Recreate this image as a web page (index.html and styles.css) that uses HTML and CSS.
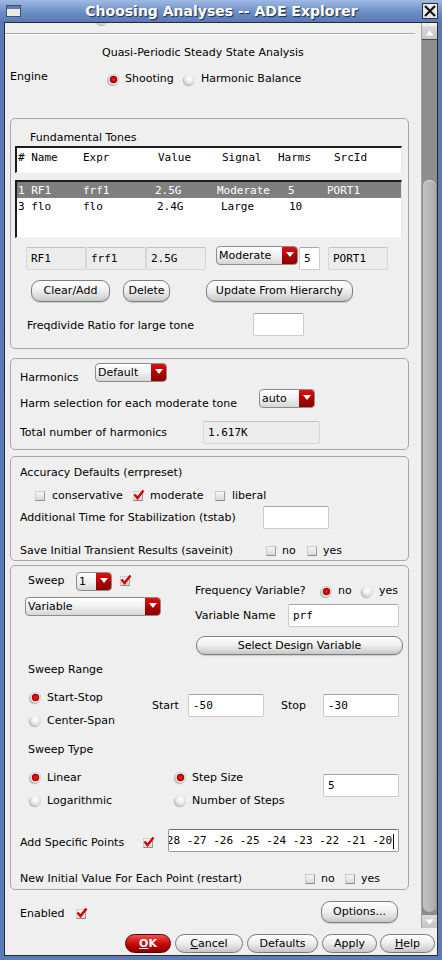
FILE: index.html
```html
<!DOCTYPE html>
<html>
<head>
<meta charset="utf-8">
<link rel="stylesheet" href="styles.css">
</head>
<body>
<div class="window">
  <div class="titlebar">
    <span class="win-icon"></span>
    <span class="title">Choosing Analyses -- ADE Explorer</span>
    <span class="close"><svg width="14" height="14" viewBox="0 0 14 14"><path d="M2 2 L12 12 M12 2 L2 12" stroke="#111" stroke-width="2.2" fill="none"/></svg></span>
  </div>
  <div class="frame">
    <div class="scrollarea">
      <div class="pane">
        <div class="clipped"><div class="clipped-inner"><span class="radio"></span><span class="clip-text">new</span></div></div>
        <div class="sep"></div>
        <div class="heading">Quasi-Periodic Steady State Analysis</div>
        <div class="engine-row">
          <span class="engine-label">Engine</span>
          <span class="radio on"></span><span class="opt opt-shooting">Shooting</span>
          <span class="radio"></span><span class="opt">Harmonic Balance</span>
        </div>

        <section class="group group-tones">
          <div class="tones-title">Fundamental Tones</div>
          <div class="list-header mono">
            <span class="h1"># Name</span><span class="h2">Expr</span><span class="h3">Value</span><span class="h4">Signal</span><span class="h5">Harms</span><span>SrcId</span>
          </div>
          <div class="list-box mono">
            <div class="list-row selected">
              <span class="r1c1">1 RF1</span><span class="r1c2">frf1</span><span class="r1c3">2.5G</span><span class="r1c4">Moderate</span><span class="r1c5">5</span><span>PORT1</span>
            </div>
            <div class="list-row">
              <span class="r2c1">3 flo</span><span class="r2c2">flo</span><span class="r2c3">2.4G</span><span class="r2c4">Large</span><span>10</span>
            </div>
          </div>
          <div class="tone-fields">
            <span class="field disabled mono f-name">RF1</span>
            <span class="field disabled mono f-expr">frf1</span>
            <span class="field disabled mono f-value">2.5G</span>
            <span class="combo combo-signal"><span class="combo-text">Moderate</span><span class="combo-arrow"></span></span>
            <span class="field mono f-harms">5</span>
            <span class="field disabled mono f-src">PORT1</span>
          </div>
          <div class="tone-buttons">
            <span class="btn btn-clear">Clear/Add</span>
            <span class="btn btn-delete">Delete</span>
            <span class="btn btn-update">Update From Hierarchy</span>
          </div>
          <div class="freqdiv-row">
            <span class="lbl-freqdiv">Freqdivide Ratio for large tone</span>
            <span class="field f-freqdiv"></span>
          </div>
        </section>

        <section class="group group-harm">
          <div class="harm-row">
            <span class="lbl-harm">Harmonics</span>
            <span class="combo combo-default"><span class="combo-text">Default</span><span class="combo-arrow"></span></span>
          </div>
          <div class="harmsel-row">
            <span class="lbl-harmsel">Harm selection for each moderate tone</span>
            <span class="combo combo-auto"><span class="combo-text">auto</span><span class="combo-arrow"></span></span>
          </div>
          <div class="total-row">
            <span class="lbl-total">Total number of harmonics</span>
            <span class="field disabled mono f-total">1.617K</span>
          </div>
        </section>

        <section class="group group-acc">
          <div class="acc-title">Accuracy Defaults (errpreset)</div>
          <div class="acc-checks">
            <span class="check c-cons"></span><span class="ck-lbl lbl-cons">conservative</span>
            <span class="check on"><svg class="tick" width="12" height="12" viewBox="0 0 12 12"><path d="M1.5 5.5 L4.5 9 L10.5 1.5" stroke="#d40000" stroke-width="2.4" fill="none"/></svg></span><span class="ck-lbl lbl-mod">moderate</span>
            <span class="check"></span><span class="ck-lbl">liberal</span>
          </div>
          <div class="tstab-row">
            <span class="lbl-tstab">Additional Time for Stabilization (tstab)</span>
            <span class="field f-tstab"></span>
          </div>
          <div class="save-row">
            <span class="lbl-save">Save Initial Transient Results (saveinit)</span>
            <span class="check"></span><span class="ck-lbl lbl-no">no</span>
            <span class="check"></span><span class="ck-lbl">yes</span>
          </div>
        </section>

        <section class="group group-sweep">
          <div class="sweep-top">
            <div class="sweep-left">
              <div class="sweep-row">
                <span class="lbl-sweep">Sweep</span>
                <span class="combo combo-num"><span class="combo-text">1</span><span class="combo-arrow"></span></span>
                <span class="check on sweep-check"><svg class="tick" width="12" height="12" viewBox="0 0 12 12"><path d="M1.5 5.5 L4.5 9 L10.5 1.5" stroke="#d40000" stroke-width="2.4" fill="none"/></svg></span>
              </div>
              <span class="combo combo-variable"><span class="combo-text">Variable</span><span class="combo-arrow"></span></span>
            </div>
            <div class="sweep-right">
              <div class="freqvar-row">
                <span class="lbl-freqvar">Frequency Variable?</span>
                <span class="radio on"></span><span class="opt lbl-fno">no</span>
                <span class="radio"></span><span class="opt">yes</span>
              </div>
              <div class="varname-row">
                <span class="lbl-varname">Variable Name</span>
                <span class="field mono f-varname">prf</span>
              </div>
              <span class="btn btn-select">Select Design Variable</span>
            </div>
          </div>

          <div class="sec-title">Sweep Range</div>
          <div class="range-block">
            <div class="radio-col range-col">
              <div class="radio-line"><span class="radio on"></span><span class="opt">Start-Stop</span></div>
              <div class="radio-line"><span class="radio"></span><span class="opt">Center-Span</span></div>
            </div>
            <div class="range-fields">
              <span class="lbl-start">Start</span>
              <span class="field mono f-range">-50</span>
              <span class="lbl-stop">Stop</span>
              <span class="field mono f-range">-30</span>
            </div>
          </div>

          <div class="sec-title sec-type">Sweep Type</div>
          <div class="type-block">
            <div class="radio-col type-col1">
              <div class="radio-line"><span class="radio on"></span><span class="opt">Linear</span></div>
              <div class="radio-line"><span class="radio"></span><span class="opt">Logarithmic</span></div>
            </div>
            <div class="radio-col type-col2">
              <div class="radio-line"><span class="radio on"></span><span class="opt">Step Size</span></div>
              <div class="radio-line"><span class="radio"></span><span class="opt">Number of Steps</span></div>
            </div>
            <span class="field mono f-step">5</span>
          </div>

          <div class="points-row">
            <span class="lbl-points">Add Specific Points</span>
            <span class="check on points-check"><svg class="tick" width="12" height="12" viewBox="0 0 12 12"><path d="M1.5 5.5 L4.5 9 L10.5 1.5" stroke="#d40000" stroke-width="2.4" fill="none"/></svg></span>
            <span class="field mono f-points"><span class="points-text">-29 -28 -27 -26 -25 -24 -23 -22 -21 -20</span><span class="caret"></span></span>
          </div>

          <div class="restart-row">
            <span class="lbl-restart">New Initial Value For Each Point (restart)</span>
            <span class="check"></span><span class="ck-lbl lbl-rno">no</span>
            <span class="check"></span><span class="ck-lbl">yes</span>
          </div>
        </section>

        <div class="enabled-row">
          <span class="lbl-enabled">Enabled</span>
          <span class="check on enabled-check"><svg class="tick" width="12" height="12" viewBox="0 0 12 12"><path d="M1.5 5.5 L4.5 9 L10.5 1.5" stroke="#d40000" stroke-width="2.4" fill="none"/></svg></span>
          <span class="btn btn-options">Options...</span>
        </div>
      </div>
      <div class="vscroll">
        <div class="sb-btn sb-up"><svg width="9" height="6" viewBox="0 0 9 6"><path d="M0.5 5.5 L4.5 0.5 L8.5 5.5 Z" fill="#fff"/></svg></div>
        <div class="sb-track"><div class="sb-thumb"></div></div>
        <div class="sb-btn sb-down"><svg width="9" height="6" viewBox="0 0 9 6"><path d="M0.5 0.5 L4.5 5.5 L8.5 0.5 Z" fill="#fff"/></svg></div>
      </div>
    </div>
    <div class="footer">
      <span class="fbtn fbtn-ok"><u>O</u>K</span>
      <span class="fbtn fbtn-cancel"><u>C</u>ancel</span>
      <span class="fbtn fbtn-defaults">Defaults</span>
      <span class="fbtn fbtn-apply">Apply</span>
      <span class="fbtn fbtn-help"><u>H</u>elp</span>
    </div>
  </div>
</div>
</body>
</html>
```

FILE: styles.css
```css
* { box-sizing: border-box; }
html, body { margin: 0; padding: 0; }
body {
  width: 442px; height: 960px; overflow: hidden;
  font-family: "DejaVu Sans", "Noto Sans", sans-serif;
  font-size: 11px; line-height: 14px; color: #000;
  background: #5a7db9;
}
.mono { font-family: "DejaVu Sans Mono", "Liberation Mono", monospace; font-size: 11px; }

.window {
  width: 442px; height: 960px;
  display: flex; flex-direction: column;
  background: linear-gradient(#9fb9e2 0, #6d8fc8 12px, #5879b6 22px, #5a7db9 100%);
}
.titlebar { height: 22px; display: flex; align-items: center; flex: none; }
.win-icon {
  margin-left: 6px; width: 15px; height: 12px;
  border: 1px solid #3e4f70;
  background: linear-gradient(#5c7cb0 0, #5c7cb0 3px, #e6eadf 3px);
}
.title {
  flex: 1; text-align: center; color: #fff;
  font-weight: bold; font-size: 14px; line-height: 22px;
  text-shadow: 1px 1px 1px #1e2a44;
}
.close {
  width: 16px; height: 16px; margin-right: 4px;
  border: 1px solid #2e2e2e; background: #e9e9e9;
  display: flex; align-items: center; justify-content: center;
}

.frame {
  flex: 1; margin: 0 4px 4px 4px;
  border: 1px solid #2a2a2a;
  background: #efefef;
  display: flex; flex-direction: column;
}
.scrollarea { height: 905px; display: flex; flex: none; }
.pane { width: 416px; overflow: hidden; display: flex; flex-direction: column; flex: none; }

.clipped { height: 10px; overflow: hidden; flex: none; }
.clipped-inner { margin-top: -11px; margin-left: 92px; height: 14px; display: flex; align-items: center; }
.clip-text { margin-left: 9px; }
.sep { width: 410px; height: 2px; border-top: 1px solid #a8a8a8; border-bottom: 1px solid #fff; flex: none; }
.heading { margin-top: 11px; padding-left: 97px; }

.engine-row { margin-top: 8px; margin-left: 5px; height: 22px; display: flex; align-items: center; }
.engine-label { width: 98px; align-self: flex-start; margin-top: 2px; }
.opt { margin-left: 6px; }
.opt-shooting { width: 59px; }
.radio-line .opt { margin-left: 6px; }

/* radio & check */
.radio {
  width: 11px; height: 11px; border-radius: 50%; flex: none;
  background: radial-gradient(circle at 50% 40%, #ffffff 0, #ececec 45%, #c4c4c4 85%, #a8a8a8 100%);
  box-shadow: -1px 1px 1px rgba(0,0,0,0.25);
}
.radio.on {
  background: radial-gradient(circle at 50% 50%, #ff2020 0, #d00000 2.6px, #8a0000 3.4px, #cfcfcf 4px, #efefef 4.6px, #b4b4b4 5.5px);
}
.check {
  width: 10px; height: 10px; flex: none; position: relative;
  background: linear-gradient(#f6f6f6, #d9d9d9);
  border: 1px solid #cdcdcd; border-right-color: #9c9c9c; border-bottom-color: #8c8c8c;
}
.check .tick { position: absolute; left: -1px; top: -3px; }
.ck-lbl { margin-left: 7px; }

/* group */
.group {
  margin-left: 5px; width: 399px; flex: none;
  border: 1px solid #a6a6a6; border-radius: 5px;
  display: flex; flex-direction: column;
}

/* fields */
.field {
  height: 23px; flex: none;
  background: #fff;
  border: 1px solid #cbcbcb; border-top-color: #a4a4a4; border-radius: 2px;
  display: flex; align-items: center; padding-left: 4px; padding-top: 1px;
  white-space: pre; overflow: hidden;
}
.field.disabled { background: #ececec; border-color: #d6d6d6; border-top-color: #c2c2c2; }

/* combo */
.combo {
  height: 19px; flex: none; display: flex;
  border: 1px solid #8c8c8c; border-radius: 4px; overflow: hidden;
  background: linear-gradient(#ffffff, #f1f1f1 50%, #d6d6d6);
}
.combo-text { flex: 1; padding-left: 2px; line-height: 17px; }
.combo-arrow {
  width: 15px; flex: none;
  background: linear-gradient(#e01010, #b00000 50%, #8a0000);
  display: flex; align-items: center; justify-content: center;
}
.combo-arrow::before {
  content: ""; width: 0; height: 0; margin-top: -2px;
  border-left: 4px solid transparent; border-right: 4px solid transparent;
  border-top: 5px solid #fff;
}

/* buttons */
.btn {
  height: 22px; flex: none;
  border: 1px solid #7e7e7e; border-radius: 9px;
  background: linear-gradient(#ffffff, #f0f0f0 45%, #d8d8d8 80%, #c6c6c6);
  display: flex; align-items: center; justify-content: center;
  box-shadow: 0 1px 1px rgba(0,0,0,0.15);
}

/* group 1 */
.group-tones { margin-top: 28px; padding-bottom: 12px; }
.tones-title { margin-top: 12px; margin-left: 19px; }
.list-header, .list-box {
  margin-left: 4px; width: 387px; background: #fff;
  border-top: 2px solid #1c1c1c; border-left: 2px solid #1c1c1c;
  border-right: 1px solid #e4e4e4; border-bottom: 1px solid #f4f4f4;
}
.list-header span, .list-row span { white-space: pre; flex: none; }
.list-header { margin-top: 1px; height: 27px; padding-top: 3px; padding-left: 1px; display: flex; align-items: flex-start; }
.h1 { width: 65px; } .h2 { width: 75px; } .h3 { width: 64px; } .h4 { width: 56px; } .h5 { width: 56px; }
.list-box { margin-top: 7px; height: 58px; display: flex; flex-direction: column; }
.list-row { height: 16px; line-height: 17px; display: flex; padding-left: 1px; flex: none; }
.list-row.selected { background: #7f7f7f; color: #fff; }
.r1c1 { width: 65px; } .r1c2 { width: 72px; } .r1c3 { width: 62px; } .r1c4 { width: 71px; } .r1c5 { width: 39px; }
.r2c1 { width: 65px; } .r2c2 { width: 74px; } .r2c3 { width: 64px; } .r2c4 { width: 68px; }

.tone-fields { margin-top: 8px; height: 24px; display: flex; align-items: flex-start; }
.tone-fields .field { margin-top: 1px; }
.f-name { margin-left: 15px; width: 60px; }
.f-expr { width: 60px; }
.f-value { width: 60px; }
.combo-signal { margin-left: 10px; width: 82px; }
.f-harms { margin-left: 1px; width: 21px; }
.f-src { margin-left: 8px; width: 60px; }

.tone-buttons { margin-top: 10px; display: flex; }
.btn-clear { margin-left: 20px; width: 79px; }
.btn-delete { margin-left: 13px; width: 47px; }
.btn-update { margin-left: 36px; width: 147px; }

.freqdiv-row { margin-top: 11px; display: flex; align-items: center; }
.lbl-freqdiv { margin-left: 16px; width: 226px; margin-top: 2px; }
.f-freqdiv { width: 51px; }

/* group 2 */
.group-harm { margin-top: 9px; padding-bottom: 5px; }
.harm-row { margin-top: 4px; height: 19px; display: flex; align-items: flex-start; }
.lbl-harm { margin-left: 9px; width: 75px; margin-top: 8px; }
.combo-default { width: 72px; }
.harmsel-row { margin-top: 7px; height: 19px; display: flex; align-items: flex-start; }
.lbl-harmsel { margin-left: 9px; width: 239px; margin-top: 8px; }
.combo-auto { width: 56px; }
.total-row { margin-top: 13px; display: flex; align-items: center; }
.lbl-total { margin-left: 9px; width: 183px; }
.f-total { width: 117px; }

/* group 3 */
.group-acc { margin-top: 6px; padding-bottom: 2px; }
.acc-title { margin-top: 9px; margin-left: 9px; }
.acc-checks { margin-top: 9px; height: 14px; display: flex; align-items: center; }
.c-cons { margin-left: 24px; }
.lbl-cons { width: 81px; }
.lbl-mod { width: 65px; }
.tstab-row { margin-top: 3px; display: flex; align-items: center; }
.lbl-tstab { margin-left: 9px; width: 243px; }
.f-tstab { width: 66px; }
.save-row { margin-top: 15px; height: 14px; display: flex; align-items: center; }
.lbl-save { margin-left: 9px; width: 246px; }
.save-row .ck-lbl, .restart-row .ck-lbl { margin-left: 6px; }
.lbl-no { width: 25px; }

/* group 4 */
.group-sweep { margin-top: 4px; padding-bottom: 3px; }
.sweep-top { display: flex; }
.sweep-left { width: 184px; display: flex; flex-direction: column; align-items: flex-start; }
.sweep-row { margin-top: 6px; display: flex; align-items: flex-start; }
.lbl-sweep { margin-left: 17px; width: 48px; margin-top: 2px; }
.combo-num { width: 36px; }
.sweep-check { margin-left: 8px; margin-top: 4px; }
.combo-variable { margin-left: 14px; margin-top: 6px; width: 136px; }
.sweep-right { display: flex; flex-direction: column; align-items: flex-start; }
.freqvar-row { margin-top: 18px; height: 14px; display: flex; align-items: center; }
.lbl-freqvar { width: 126px; }
.lbl-fno { width: 24px; }
.varname-row { margin-top: 6px; display: flex; align-items: center; }
.lbl-varname { width: 93px; }
.f-varname { width: 111px; }
.btn-select { margin-top: 9px; margin-left: 1px; width: 207px; height: 19px; }

.sec-title { margin-top: 8px; margin-left: 17px; }
.sec-type { margin-top: 11px; }
.radio-col { display: flex; flex-direction: column; }
.radio-line { height: 23px; display: flex; align-items: center; }
.range-block { margin-top: 9px; display: flex; align-items: flex-start; }
.range-col { margin-left: 19px; width: 122px; }
.range-fields { margin-top: 8px; display: flex; align-items: center; }
.lbl-start { width: 36px; }
.f-range { width: 76px; }
.lbl-stop { margin-left: 17px; width: 42px; }

.type-block { margin-top: 9px; display: flex; align-items: flex-start; }
.type-col1 { margin-left: 19px; width: 145px; }
.type-col2 { width: 148px; }
.f-step { margin-top: 8px; width: 76px; }

.points-row { margin-top: 17px; height: 23px; display: flex; align-items: flex-start; }
.lbl-points { margin-left: 9px; width: 123px; margin-top: 7px; }
.points-check { margin-top: 9px; }
.f-points { margin-left: 15px; width: 231px; justify-content: flex-end; padding-left: 0; padding-right: 4px; border-color: #9a9a9a; border-top-color: #6e6e6e; }
.points-text { flex: none; }
.caret { width: 1px; height: 15px; background: #000; flex: none; margin-left: 1px; }

.restart-row { margin-top: 20px; height: 14px; display: flex; align-items: center; }
.lbl-restart { margin-left: 9px; width: 285px; }
.lbl-rno { width: 24px; }

.enabled-row { margin-top: 11px; height: 22px; display: flex; align-items: center; }
.lbl-enabled { margin-left: 15px; width: 56px; margin-top: 3px; }
.enabled-check { margin-top: 3px; }
.btn-options { margin-left: 235px; width: 77px; }

/* scrollbar */
.vscroll {
  width: 16px; flex: none; padding-top: 3px;
  border-left: 1px solid #a4a4a4;
  display: flex; flex-direction: column;
}
.sb-btn {
  height: 14px; flex: none; background: linear-gradient(#d9d9d9, #c4c4c4);
  display: flex; align-items: center; justify-content: center;
}
.sb-up { border-bottom: 1px solid #4c4c4c; }
.sb-down { border-top: 1px solid #8a8a8a; }
.sb-track { flex: 1; background: #8e8e8e; padding: 140px 1px 2px 1px; display: flex; }
.sb-thumb {
  flex: 1; border-radius: 7px;
  background: linear-gradient(90deg, #c2c2c2, #b6b6b6 60%, #a9a9a9);
  box-shadow: inset 0 1px 0 #d8d8d8;
}

/* footer */
.footer { flex: 1; display: flex; padding-top: 6px; padding-left: 120px; }
.fbtn {
  height: 19px; flex: none;
  border: 1px solid #7a7a7a; border-radius: 10px;
  background: linear-gradient(#ffffff, #efefef 45%, #d6d6d6 80%, #c4c4c4);
  display: flex; align-items: center; justify-content: center;
  line-height: 14px;
}
.fbtn-ok {
  width: 46px; color: #fff; font-weight: bold;
  border-color: #5a0000;
  background: linear-gradient(#f05050, #d01010 45%, #a80000 80%, #8a0000);
}
.fbtn-cancel { margin-left: 4px; width: 68px; }
.fbtn-defaults { margin-left: 4px; width: 71px; }
.fbtn-apply { margin-left: 4px; width: 55px; }
.fbtn-help { margin-left: 3px; width: 55px; }
```
